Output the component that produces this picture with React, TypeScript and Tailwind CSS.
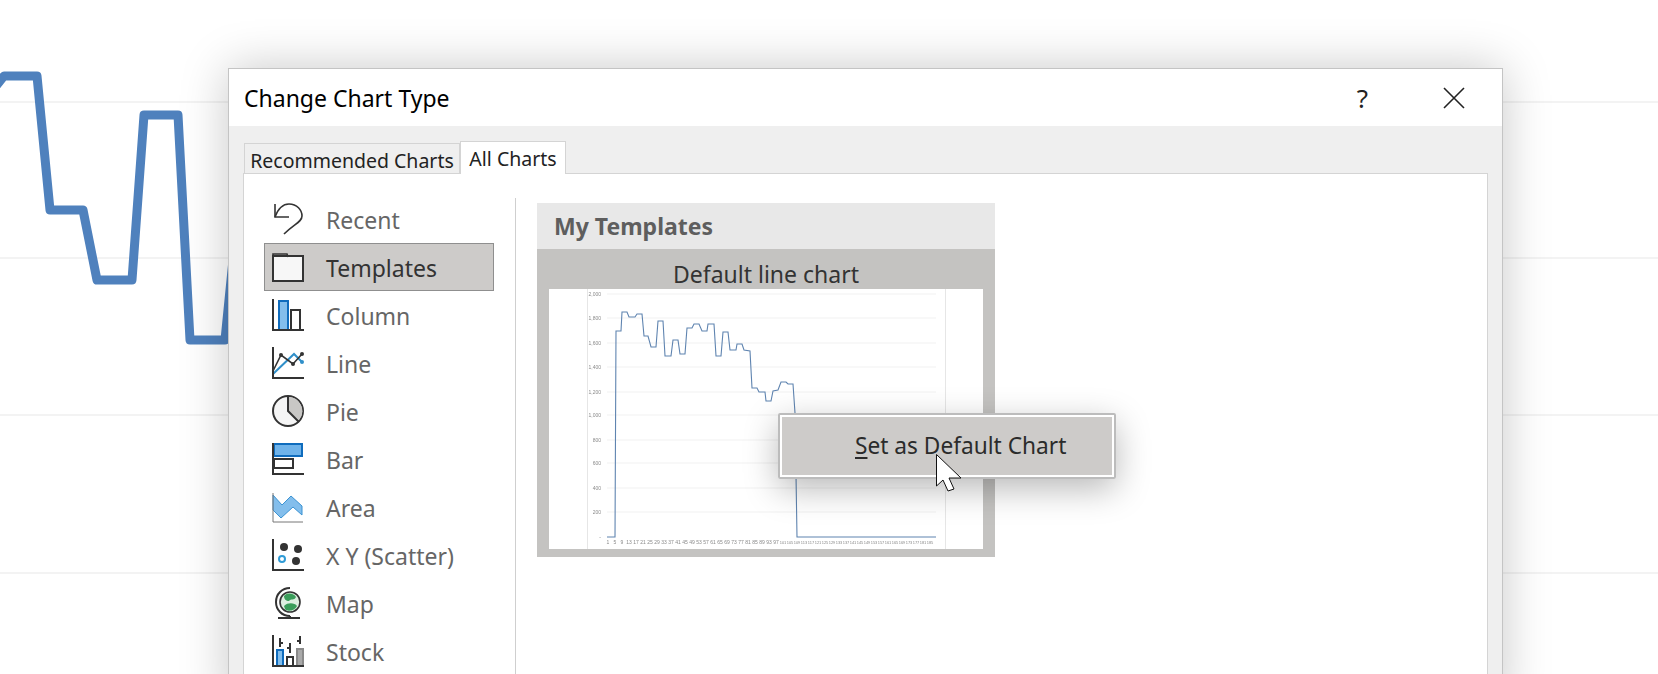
import type { ReactNode } from 'react';

const FONT = "font-['Noto_Sans','Open_Sans',sans-serif]";

const miniLine =
  '607,537 615,537 616,331 621,331 622,312 627,312 629,317 635,317 637,314 642,314 644,336 648,336 651,347 656,347 658,321 663,321 665,356 671,356 673,340 678,340 680,354 685,354 687,328 692,328 694,324 699,324 702,331 707,331 708,324 714,324 716,356 721,356 723,332 728,332 730,350 736,350 737,344 742,344 744,350 750,351 752,388 757,388 759,392 765,392 766,401 771,401 773,391 778,390 781,382 786,382 788,384 793,384 795,413 797,537 936,537';

const yTicks = [
  ['2,000', 294],
  ['1,800', 318],
  ['1,600', 343],
  ['1,400', 367],
  ['1,200', 392],
  ['1,000', 415],
  ['800', 440],
  ['600', 463],
  ['400', 488],
  ['200', 512],
  ['-', 537],
] as const;

const xTicks = Array.from({ length: 47 }, (_, i) => 1 + i * 4);

function IconBox({ children }: { children: ReactNode }) {
  return (
    <svg width="32" height="32" viewBox="0 0 32 32" fill="none" className="shrink-0">
      {children}
    </svg>
  );
}

const Axes = () => <path d="M1 0V31H32" stroke="#333" strokeWidth="2" />;

const icons: Record<string, ReactNode> = {
  Recent: (
    <IconBox>
      <path d="M3 1V14H17" stroke="#333" strokeWidth="1.6" />
      <path d="M3 14C6 6 11 1 17 1C25 1 30 7 30 13C30 19 22 21 12 31" stroke="#333" strokeWidth="1.6" />
    </IconBox>
  ),
  Templates: (
    <IconBox>
      <path d="M1 5H31V30H1Z" fill="#f7f7f7" stroke="#333" strokeWidth="2" />
      <path d="M1 5V3H15L16 6" stroke="#333" strokeWidth="1.6" />
    </IconBox>
  ),
  Column: (
    <IconBox>
      <rect x="7" y="2" width="9" height="29" fill="#83beec" stroke="#0f6cbd" strokeWidth="2" />
      <rect x="19" y="11" width="9" height="20" fill="#fff" stroke="#333" strokeWidth="2" />
      <Axes />
    </IconBox>
  ),
  Line: (
    <IconBox>
      <path d="M1 27L22 7L30 15" stroke="#2f8fc9" strokeWidth="2" />
      <path d="M1 24L9 8L21 17L30 7" stroke="#333" strokeWidth="1.6" />
      <circle cx="9" cy="8" r="2" fill="#333" />
      <circle cx="21" cy="17" r="2" fill="#333" />
      <circle cx="30" cy="7" r="2" fill="#333" />
      <circle cx="30" cy="15" r="2" fill="#2f8fc9" />
      <Axes />
    </IconBox>
  ),
  Pie: (
    <IconBox>
      <circle cx="16" cy="16" r="15" fill="#f5f5f5" stroke="#333" strokeWidth="2" />
      <path d="M16 2A14 14 0 0 1 27 25L16 16Z" fill="#c8c7c5" />
      <path d="M16 1V16L27 27" stroke="#333" strokeWidth="2" />
    </IconBox>
  ),
  Bar: (
    <IconBox>
      <rect x="2" y="1" width="28" height="12" fill="#6fb3ea" stroke="#0f6cbd" strokeWidth="2" />
      <rect x="2" y="16" width="19" height="9" fill="#fff" stroke="#333" strokeWidth="2" />
      <Axes />
    </IconBox>
  ),
  Area: (
    <IconBox>
      <path d="M1 4L10 14L19 5L30 15V24L21 16L9 27L1 19Z" fill="#83beec" stroke="#3b93d3" />
      <path d="M1 2V31H31" stroke="#777" />
    </IconBox>
  ),
  'X Y (Scatter)': (
    <IconBox>
      <circle cx="12" cy="8" r="4" fill="#333" />
      <circle cx="26" cy="10" r="4" fill="#333" />
      <circle cx="24" cy="22" r="4" fill="#333" />
      <circle cx="10" cy="20" r="3" fill="#fff" stroke="#2f9bd6" strokeWidth="2" />
      <Axes />
    </IconBox>
  ),
  Map: (
    <IconBox>
      <circle cx="18" cy="15" r="10" fill="#dcefe0" stroke="#333" strokeWidth="1.6" />
      <path d="M12 9C15 5 22 6 24 10C22 14 19 11 17 14C14 14 12 12 12 9Z" fill="#3a9d5a" />
      <path d="M12 19C16 15 23 16 25 19C23 24 15 25 13 22Z" fill="#3a9d5a" />
      <path d="M18 1C10 1 4 7 4 15C4 23 10 29 18 29" stroke="#333" strokeWidth="2" />
      <path d="M18 29V31M6 31H28" stroke="#333" strokeWidth="2" />
    </IconBox>
  ),
  Stock: (
    <IconBox>
      <rect x="5" y="15" width="6" height="16" fill="#83beec" stroke="#0f6cbd" strokeWidth="2" />
      <rect x="15" y="22" width="6" height="9" fill="#fff" stroke="#333" strokeWidth="2" />
      <rect x="25" y="14" width="6" height="17" fill="#a9a9a9" stroke="#8a8a8a" strokeWidth="2" />
      <path d="M8 3V12M8 8H11M18 8V18M18 13H15M28 1V9M28 6H25" stroke="#333" strokeWidth="2" />
      <Axes />
    </IconBox>
  ),
};

const categories = ['Recent', 'Templates', 'Column', 'Line', 'Pie', 'Bar', 'Area', 'X Y (Scatter)', 'Map', 'Stock'];

function MiniChart() {
  return (
    <svg viewBox="549 289 434 260" className="h-[260px] w-[434px] bg-white">
      <g stroke="#f1f1f1">
        {yTicks.slice(0, -1).map(([label, y]) => (
          <line key={label} x1="607" x2="936" y1={y} y2={y} />
        ))}
      </g>
      <path d="M587.5 289V549M945.5 289V549" stroke="#e6e6e6" />
      <polyline points={miniLine} fill="none" stroke="#5f84b0" strokeWidth="1.1" />
      <g fontFamily="Liberation Sans, sans-serif" fontSize="5" fill="#8a8a8a" className="blur-[0.4px]">
        {yTicks.map(([label, y]) => (
          <text key={label} x="601" y={y + 2} textAnchor="end">
            {label}
          </text>
        ))}
        {xTicks.map((n, i) => (
          <text key={n} x={608 + i * 7} y="544" textAnchor="middle" fontSize={n > 100 ? 4 : 5}>
            {n}
          </text>
        ))}
      </g>
    </svg>
  );
}

export default function App() {
  return (
    <div className={`relative h-[674px] w-[1658px] overflow-hidden bg-white ${FONT}`}>
      {/* chart behind the dialog */}
      <svg viewBox="0 0 1658 674" className="absolute inset-0 h-[674px] w-[1658px]">
        <g stroke="#f3f3f3" strokeWidth="2">
          <line x1="0" x2="1658" y1="102" y2="102" />
          <line x1="0" x2="1658" y1="258" y2="258" />
          <line x1="0" x2="1658" y1="415" y2="415" />
          <line x1="0" x2="1658" y1="573" y2="573" />
        </g>
        <polyline
          points="-4,86 4,76 37,76 50,210 83,210 97,280 132,280 144,115 178,115 190,340 225,340 236,230"
          fill="none"
          stroke="#4f81bd"
          strokeWidth="9"
          strokeLinejoin="round"
        />
      </svg>

      {/* dialog */}
      <div className="absolute left-[228px] top-[68px] flex h-[640px] w-[1275px] flex-col border border-[#c4c4c4] bg-white shadow-[0_0_45px_rgba(0,0,0,0.22)]">
        <div className="flex h-[57px] shrink-0 items-center justify-between pl-[15px]">
          <h1 className="pt-[2px] text-[23px] text-black">Change Chart Type</h1>
          <div className="flex items-center">
            <span className="mr-[75px] text-[26px] leading-none text-[#222]">?</span>
            <svg width="22" height="22" viewBox="0 0 22 22" className="mr-[37px]">
              <path d="M1 1L21 21M21 1L1 21" stroke="#222" strokeWidth="1.6" />
            </svg>
          </div>
        </div>

        <div className="flex min-h-0 flex-1 flex-col bg-[#efefef] px-[14px]">
          <div className="flex h-[47px] shrink-0 items-end pl-[1px]">
            <div className="flex h-[30px] w-[216px] items-center justify-center border border-b-0 border-[#d4d4d4] pt-[5px] text-[19.5px] text-[#222]">
              Recommended Charts
            </div>
            <div className="relative z-10 -mb-px flex h-[33px] w-[106px] items-center justify-center border border-b-0 border-[#d4d4d4] bg-white pt-[2px] text-[19.5px] text-[#222]">
              All Charts
            </div>
          </div>

          <div className="flex min-h-0 flex-1 border border-[#d4d4d4] bg-white pt-[21px]">
            <div className="mt-[3px] h-full w-[272px] shrink-0 border-r border-[#cfcfcf] pl-[20px]">
              <div className="-mt-[3px]">
                {categories.map((name) => (
                  <div
                    key={name}
                    className={`flex h-[48px] w-[230px] items-center gap-[22px] border pl-[7px] text-[23px] ${
                      name === 'Templates' ? 'border-[#8f8f8f] bg-[#cdcbc9] text-[#333]' : 'border-transparent text-[#666]'
                    }`}
                  >
                    {icons[name]}
                    <span className="pt-[3px]">{name}</span>
                  </div>
                ))}
              </div>
            </div>

            <div className="ml-[21px] mt-[8px] w-[458px] shrink-0">
              <div className="flex h-[46px] items-center bg-[#e8e8e8] pl-[17px] pt-[1px] text-[23px] font-bold text-[#5e5e5e]">
                My Templates
              </div>
              <div className="bg-[#c4c3c1] px-[12px] pb-[8px]">
                <div className="flex h-[40px] items-center justify-center pt-[11px] text-[23px] text-[#333]">
                  Default line chart
                </div>
                <MiniChart />
              </div>
            </div>
          </div>
        </div>
      </div>

      {/* context menu */}
      <div className="absolute left-[778px] top-[413px] h-[66px] w-[338px] rounded-[2px] border-2 border-[#bcbcbc] shadow-[0_10px_34px_rgba(0,0,0,0.28)]">
        <div className="flex h-full items-center border-2 border-white bg-[#cdcbc9] pl-[73px] pt-[1px] text-[22.7px] text-[#2b2b2b]">
          <span>
            <span className="underline underline-offset-[3px]">S</span>et as Default Chart
          </span>
        </div>
      </div>

      {/* mouse pointer */}
      <svg width="28" height="40" viewBox="0 0 28 40" className="absolute left-[936px] top-[454px]">
        <path d="M0.5 0.5V32L7 26L12 37L18 35L13 24H25Z" fill="#fff" stroke="#111" />
      </svg>
    </div>
  );
}
